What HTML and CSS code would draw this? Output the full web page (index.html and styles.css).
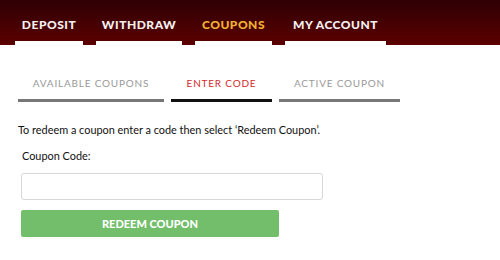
FILE: index.html
```html
<!DOCTYPE html>
<html lang="en">
<head>
    <meta charset="UTF-8">
    <title>Coupons</title>
    <link rel="stylesheet" href="styles.css">
</head>
<body>
    <div class="topbar">
        <ul class="main-nav">
            <li class="nav-item nav-deposit">DEPOSIT</li>
            <li class="nav-item nav-withdraw">WITHDRAW</li>
            <li class="nav-item nav-coupons active">COUPONS</li>
            <li class="nav-item nav-account">MY ACCOUNT</li>
        </ul>
    </div>

    <div class="sub-tabs">
        <div class="sub-tab tab-available">AVAILABLE COUPONS</div>
        <div class="sub-tab tab-enter selected">ENTER CODE</div>
        <div class="sub-tab tab-active">ACTIVE COUPON</div>
    </div>

    <p class="intro">To redeem a coupon enter a code then select ‘Redeem Coupon’.</p>

    <form class="coupon-form">
        <label class="coupon-label" for="code">Coupon Code:</label>
        <input class="coupon-input" id="code" type="text">
        <button class="redeem-btn" type="button">REDEEM COUPON</button>
    </form>
</body>
</html>
```

FILE: styles.css
```css
body {
    margin: 0;
    font-family: 'Lato', 'Liberation Sans', sans-serif;
    background-color: #fff;
    color: #222;
}

.topbar {
    height: 45px;
    background: linear-gradient(to bottom, #2e0004, #5c0000);
}

.main-nav {
    display: flex;
    gap: 13px;
    list-style: none;
    margin: 0;
    padding: 0 0 0 15px;
    height: 45px;
    box-sizing: border-box;
}

.nav-item {
    display: flex;
    align-items: center;
    justify-content: center;
    box-sizing: border-box;
    height: 45px;
    padding-top: 7px;
    border-bottom: 4px solid #fff;
    color: #f4f0f0;
    font-size: 12px;
    font-weight: 900;
    letter-spacing: 0.5px;
}

.nav-deposit {
    width: 68px;
}

.nav-withdraw {
    width: 86px;
}

.nav-coupons {
    width: 77px;
}

.nav-account {
    width: 101px;
}

.nav-item.active {
    color: #f2b134;
}

.sub-tabs {
    display: flex;
    gap: 7px;
    margin: 31px 0 0 18px;
}

.sub-tab {
    padding-bottom: 9px;
    border-bottom: 3px solid #777;
    font-size: 10px;
    line-height: 14px;
    letter-spacing: 0.8px;
    color: #999;
    text-align: center;
}

.tab-available {
    width: 146px;
}

.tab-enter {
    width: 101px;
}

.tab-active {
    width: 121px;
}

.sub-tab.selected {
    color: #d42a2a;
    border-bottom-color: #111;
}

.intro {
    margin: 20px 0 0 18px;
    font-size: 10.9px;
    line-height: 16px;
    color: #111;
}

.coupon-form {
    display: flex;
    flex-direction: column;
    align-items: flex-start;
    margin: 10px 0 0 21px;
}

.coupon-label {
    font-size: 10.9px;
    line-height: 16px;
    margin-left: 1px;
    color: #111;
}

.coupon-input {
    width: 302px;
    height: 27px;
    box-sizing: border-box;
    margin-top: 9px;
    border: 1px solid #d8d8d8;
    border-radius: 3px;
}

.redeem-btn {
    width: 258px;
    height: 27px;
    margin-top: 10px;
    border: none;
    border-radius: 2px;
    background-color: #73be6b;
    color: #fff;
    font-family: 'Lato', 'Liberation Sans', sans-serif;
    font-size: 11px;
    font-weight: 900;
}
```
